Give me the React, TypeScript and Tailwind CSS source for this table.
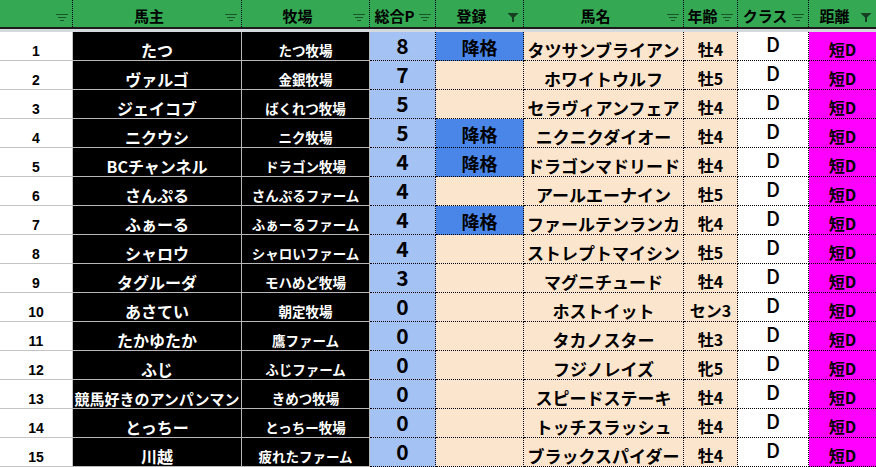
import React from 'react';

type Row = [number, string, string, number, boolean, string, string];

const rows: Row[] = [
  [1, 'たつ', 'たつ牧場', 8, true, 'タツサンブライアン', '牡4'],
  [2, 'ヴァルゴ', '金銀牧場', 7, false, 'ホワイトウルフ', '牡5'],
  [3, 'ジェイコブ', 'ばくれつ牧場', 5, false, 'セラヴィアンフェア', '牡4'],
  [4, 'ニクウシ', 'ニク牧場', 5, true, 'ニクニクダイオー', '牡4'],
  [5, 'BCチャンネル', 'ドラゴン牧場', 4, true, 'ドラゴンマドリード', '牡4'],
  [6, 'さんぷる', 'さんぷるファーム', 4, false, 'アールエーナイン', '牡5'],
  [7, 'ふぁーる', 'ふぁーるファーム', 4, true, 'ファールテンランカ', '牝4'],
  [8, 'シャロウ', 'シャロいファーム', 4, false, 'ストレプトマイシン', '牡5'],
  [9, 'タグルーダ', 'モハめど牧場', 3, false, 'マグニチュード', '牡4'],
  [10, 'あさてい', '朝定牧場', 0, false, 'ホストイット', 'セン3'],
  [11, 'たかゆたか', '鷹ファーム', 0, false, 'タカノスター', '牡3'],
  [12, 'ふじ', 'ふじファーム', 0, false, 'フジノレイズ', '牝5'],
  [13, '競馬好きのアンパンマン', 'きめつ牧場', 0, false, 'スピードステーキ', '牡4'],
  [14, 'とっちー', 'とっちー牧場', 0, false, 'トッチスラッシュ', '牡4'],
  [15, '川越', '疲れたファーム', 0, false, 'ブラックスパイダー', '牡4'],
];

function FilterLines() {
  return (
    <svg width="12" height="8" viewBox="0 0 12 8" className="mr-[4px] mb-[2px] shrink-0">
      <rect x="0" y="0" width="12" height="1" fill="rgba(0,0,0,0.5)" />
      <rect x="2" y="3" width="8" height="1" fill="rgba(0,0,0,0.5)" />
      <rect x="4" y="6" width="4" height="1" fill="rgba(0,0,0,0.5)" />
    </svg>
  );
}

function FilterFunnel() {
  return (
    <svg width="12" height="9" viewBox="0 0 12 9" className="mr-[4px] mb-[2px] shrink-0">
      <path d="M0.5 0H11.5L7 4.5V9H5V4.5Z" fill="#173d22" />
    </svg>
  );
}

const headers: { label: string; active?: boolean }[] = [
  { label: '' },
  { label: '馬主' },
  { label: '牧場' },
  { label: '総合P' },
  { label: '登録', active: true },
  { label: '馬名' },
  { label: '年齢' },
  { label: 'クラス' },
  { label: '距離', active: true },
];

const jp = "font-['Noto_Sans_CJK_JP',sans-serif]";

export default function App() {
  return (
    <div className="w-[876px] h-[467px] overflow-hidden bg-white font-['Noto_Sans_CJK_JP',sans-serif]">
      <div className="grid grid-cols-[73px_169px_128px_66px_88px_160px_54px_71px_67px] h-[27px] bg-[#34a853]">
        {headers.map((h, i) => (
          <div
            key={i}
            className={
              'flex items-end h-[27px] ' +
              (i < 8 ? 'border-r border-dotted border-black' : '')
            }
          >
            <span className="flex-1 text-center text-[15px] leading-none font-bold text-black pb-[4px] whitespace-nowrap">
              {h.label}
            </span>
            <div className="pb-[3px]">{h.active ? <FilterFunnel /> : <FilterLines />}</div>
          </div>
        ))}
      </div>
      <div className="h-[2px] bg-[#1c1c1c]" />
      <div className="h-[3px] bg-[#d6d9dd]" />
      {rows.map((r) => (
        <div
          key={r[0]}
          className="grid grid-cols-[73px_169px_128px_66px_88px_160px_54px_71px_67px] h-[29px]"
        >
          <div className="flex items-end justify-center bg-white border-r border-b border-[#c4c4c4] pb-[2px]">
            <span className="font-['Liberation_Sans',sans-serif] font-bold text-[14px] leading-none text-black">
              {r[0]}
            </span>
          </div>
          <div className="flex items-end justify-center bg-black border-r border-b border-[#b8b8b8] overflow-hidden pb-[2px]">
            <span
              className={
                jp +
                ' font-bold leading-none text-white whitespace-nowrap ' +
                (r[1].length > 9 ? 'text-[15px]' : 'text-[16px]')
              }
            >
              {r[1]}
            </span>
          </div>
          <div className="flex items-end justify-center bg-black border-r border-b border-[#b8b8b8] overflow-hidden pb-[3px]">
            <span className={jp + ' font-bold text-[13.5px] leading-none text-white whitespace-nowrap'}>
              {r[2]}
            </span>
          </div>
          <div className="flex items-end justify-center bg-[#a4c2f4] border-r border-b border-dotted border-black pb-[4px]">
            <span className="font-bold text-[21px] leading-none text-black">{r[3]}</span>
          </div>
          <div
            className={
              'flex items-end justify-center border-r border-b border-dotted border-black pb-[4px] ' +
              (r[4] ? 'bg-[#4a86e8]' : 'bg-[#fce5cd]')
            }
          >
            {r[4] ? (
              <span className="font-bold text-[18px] leading-none text-black">降格</span>
            ) : null}
          </div>
          <div className="flex items-end justify-center bg-[#fce5cd] border-r border-b border-dotted border-black overflow-hidden pb-[2px]">
            <span className="font-bold text-[17px] leading-none text-black whitespace-nowrap">{r[5]}</span>
          </div>
          <div className="flex items-end justify-center bg-[#fce5cd] border-r border-b border-dotted border-black pb-[3px]">
            <span className="font-bold text-[16px] leading-none text-black whitespace-nowrap">{r[6]}</span>
          </div>
          <div className="flex items-end justify-center bg-white border-r border-b border-dotted border-black pb-[6px]">
            <span className="font-medium text-[20px] leading-none text-black">D</span>
          </div>
          <div className="flex items-end justify-center bg-[#ff00ff] border-b border-dotted border-black pb-[3px]">
            <span className="font-bold text-[16px] leading-none text-black">短D</span>
          </div>
        </div>
      ))}
    </div>
  );
}
